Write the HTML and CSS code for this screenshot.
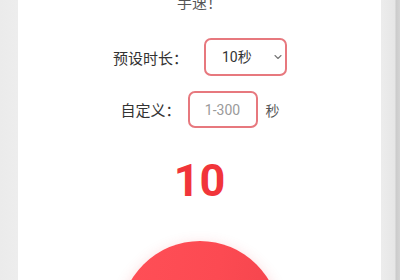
FILE: index.html
```html
<!DOCTYPE html>
<html lang="zh">
<head>
<meta charset="utf-8">
<link rel="stylesheet" href="styles.css">
</head>
<body>
<div class="card">
  <div class="title">手速！</div>
  <div class="row row-preset">
    <span class="label">预设时长：</span>
    <div class="select-wrap">
      <select class="select">
        <option>10秒</option>
        <option>20秒</option>
        <option>30秒</option>
      </select>
      <svg class="chev" width="8" height="6" viewBox="0 0 8 6"><path d="M1 1.5 L4 4.5 L7 1.5" fill="none" stroke="#777" stroke-width="1.1" stroke-linecap="round" stroke-linejoin="round"/></svg>
    </div>
  </div>
  <div class="row row-custom">
    <span class="label">自定义：</span>
    <input class="input" type="text" placeholder="1-300">
    <span class="unit">秒</span>
  </div>
  <div class="count">10</div>
  <div class="button"></div>
</div>
</body>
</html>
```
FILE: styles.css
```css
html, body {
  margin: 0;
  padding: 0;
  height: 100%;
  overflow: hidden;
}
body {
  background: linear-gradient(to right, #ebebeb 0, #ededed 17px, #ececec 382px, #e6e6e6 395px, #cbcbcb 396px, #d4d4d4 400px);
  font-family: Roboto, "Noto Sans CJK SC", sans-serif;
}
.card {
  margin-left: 18px;
  width: 363px;
  height: 100%;
  background: #ffffff;
  display: flex;
  flex-direction: column;
  align-items: center;
}
.title {
  margin-top: -8px;
  height: 20px;
  line-height: 20px;
  font-size: 15px;
  color: #555;
  font-family: "Noto Sans CJK SC", sans-serif;
}
.row {
  display: flex;
  align-items: center;
}
.row-preset {
  margin-top: 26px;
  gap: 16px;
  margin-left: 1px;
}
.row-custom {
  margin-top: 15px;
  margin-left: 1px;
}
.label {
  font-size: 15px;
  color: #333;
  font-family: "Noto Sans CJK SC", sans-serif;
}
.select-wrap {
  position: relative;
  width: 83px;
  height: 38px;
}
.select {
  appearance: none;
  -webkit-appearance: none;
  box-sizing: border-box;
  width: 83px;
  height: 38px;
  border: 2px solid #e7787e;
  border-radius: 7px;
  background: #fff;
  font-family: Roboto, "Noto Sans CJK SC", sans-serif;
  font-size: 14px;
  color: #333;
  padding: 0 0 0 16px;
  outline: none;
}
.chev {
  position: absolute;
  right: 5px;
  top: 16px;
}
.input {
  box-sizing: border-box;
  width: 70px;
  height: 37px;
  margin-left: 7px;
  border: 2px solid #e7787e;
  border-radius: 7px;
  font-family: Roboto, sans-serif;
  font-size: 14px;
  text-align: center;
  color: #333;
  outline: none;
  padding: 0;
}
.input::placeholder {
  color: #9a9a9a;
}
.unit {
  margin-left: 8px;
  font-size: 14px;
  color: #555;
  font-family: "Noto Sans CJK SC", sans-serif;
}
.count {
  margin-top: 30px;
  font-size: 45px;
  line-height: 45px;
  font-weight: 700;
  color: #f1353a;
}
.button {
  margin-top: 38px;
  flex: none;
  width: 160px;
  height: 160px;
  border-radius: 50%;
  background: linear-gradient(100deg, #ff4f57 0%, #fc4a52 55%, #f2444c 100%);
  box-shadow: 0 4px 14px rgba(240, 60, 70, 0.25);
}
```
